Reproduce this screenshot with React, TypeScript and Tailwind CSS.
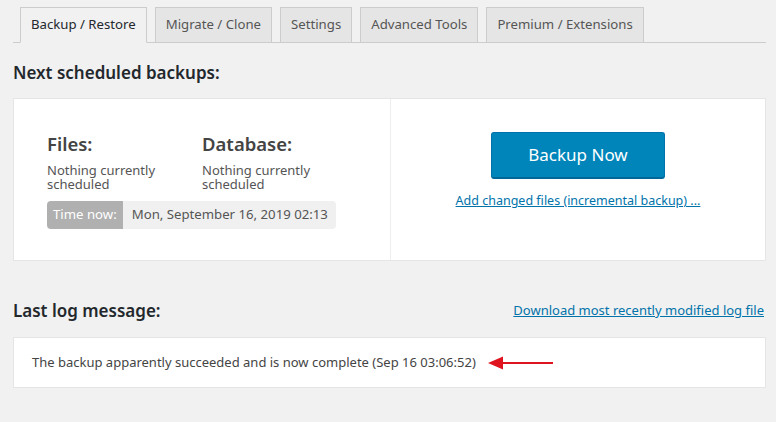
// UpdraftPlus 백업 화면 — 탭 + 예약 백업 카드 + 마지막 로그
const tabs = ['Backup / Restore', 'Migrate / Clone', 'Settings', 'Advanced Tools', 'Premium / Extensions'];

export default function App() {
  return (
    <div className="w-full h-[422px] bg-[#f1f1f1] overflow-hidden text-[#444] font-['Noto_Sans',sans-serif]">
      {/* ========== 탭 ========== */}
      <div className="ml-[13px] mr-[10px] pt-[7px] pl-[7px] flex gap-[8px] border-b border-[#ccc]">
        {tabs.map((t, i) => (
          <div
            key={t}
            className={`h-[36px] px-[10px] flex items-center text-[13.2px] border border-[#ccc] -mb-px ${
              i === 0
                ? 'bg-[#f1f1f1] border-b-[#f1f1f1] text-[#23282d]'
                : 'bg-[#e5e5e5] text-[#555]'
            }`}
          >
            {t}
          </div>
        ))}
      </div>

      {/* ========== 다음 예약 백업 ========== */}
      <div className="mx-[13px] mr-[10px]">
        <h2 className="mt-[18px] text-[17px] leading-[24px] font-semibold text-[#23282d]">Next scheduled backups:</h2>

        <div className="mt-[13px] h-[163px] bg-white border border-[#e5e5e5] flex">
          <div className="w-[377px] border-r border-[#eee] pl-[33px] pt-[33px]">
            <div className="flex">
              <div className="w-[155px]">
                <div className="text-[18.5px] leading-[24px] font-semibold">Files:</div>
                <div className="mt-[7px] text-[13px] leading-[14px] text-[#555]">
                  Nothing currently<br />scheduled
                </div>
              </div>
              <div>
                <div className="text-[18.5px] leading-[24px] font-semibold">Database:</div>
                <div className="mt-[7px] text-[13px] leading-[14px] text-[#555]">
                  Nothing currently<br />scheduled
                </div>
              </div>
            </div>
            <div className="mt-[10px] inline-flex h-[28px] rounded-[4px] overflow-hidden text-[13.2px]">
              <span className="bg-[#b0b0b0] text-white px-[6px] flex items-center">Time now:</span>
              <span className="bg-[#f0f0f0] text-[#555] pl-[9px] pr-[8px] flex items-center">Mon, September 16, 2019 02:13</span>
            </div>
          </div>

          <div className="flex-1 flex flex-col items-center pt-[33px]">
            <button
              type="button"
              className="w-[174px] h-[47px] bg-[#0085ba] border border-[#0073aa] border-b-[#006799] border-b-2 rounded-[3px] text-white text-[17px]"
            >
              Backup Now
            </button>
            <a className="mt-[13px] text-[12.5px] text-[#0073aa] underline">Add changed files (incremental backup) ...</a>
          </div>
        </div>

        {/* ========== 마지막 로그 ========== */}
        <div className="mt-[38px] flex items-center justify-between">
          <h2 className="text-[17px] leading-[24px] font-semibold text-[#23282d]">Last log message:</h2>
          <a className="text-[13px] text-[#0073aa] underline mr-[2px]">Download most recently modified log file</a>
        </div>

        <div className="mt-[14px] h-[51px] bg-white border border-[#e5e5e5] flex items-center pl-[18px] text-[13px] text-[#444]">
          <span>The backup apparently succeeded and is now complete (Sep 16 03:06:52)</span>
          <svg width="66" height="14" viewBox="0 0 66 14" className="ml-[12px]">
            <polygon points="0,7 15,0.5 15,13.5" fill="#e0141e" />
            <line x1="13" y1="7" x2="65" y2="7" stroke="#e0141e" strokeWidth="2" />
          </svg>
        </div>
      </div>
    </div>
  );
}
